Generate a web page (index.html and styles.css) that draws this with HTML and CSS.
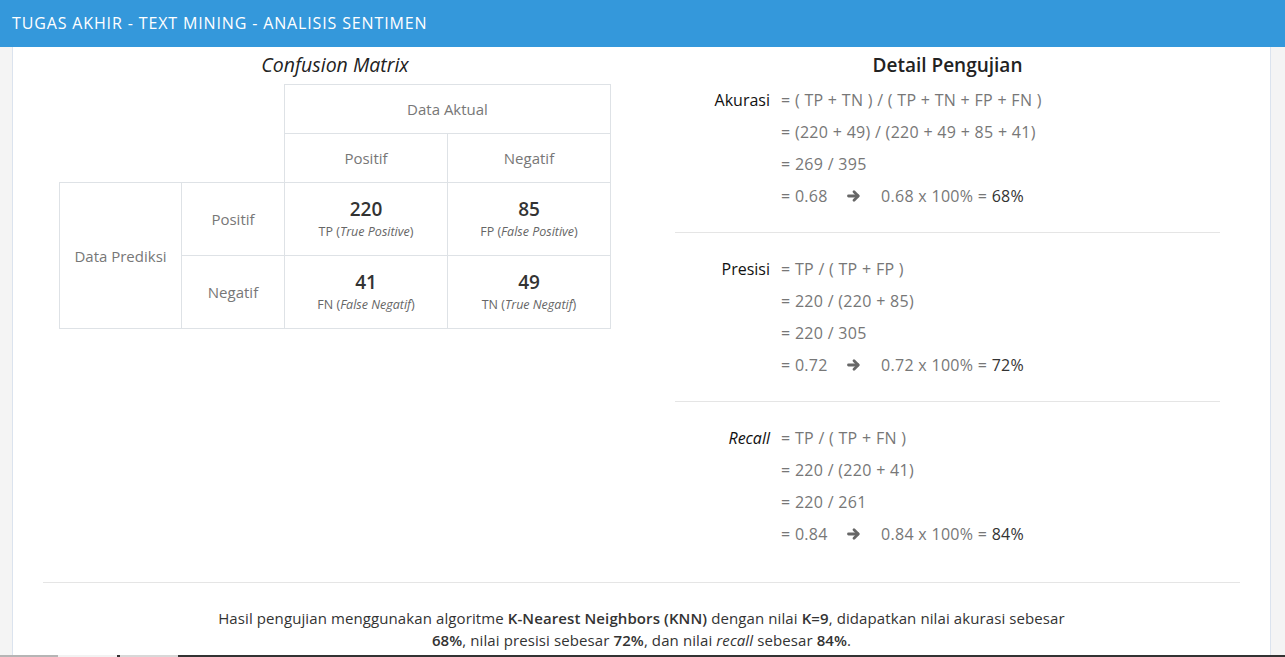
FILE: index.html
```html
<!DOCTYPE html>
<html lang="id">
<head>
<meta charset="utf-8">
<title>Tugas Akhir - Text Mining - Analisis Sentimen</title>
<link rel="stylesheet" href="styles.css">
</head>
<body>
<header class="navbar">TUGAS AKHIR - TEXT MINING - ANALISIS SENTIMEN</header>
<main class="page">
  <div class="container">
    <div class="row">
      <section class="col-left">
        <h3 class="title-matrix">Confusion Matrix</h3>
        <table class="matrix">
          <colgroup>
            <col class="c1"><col class="c2"><col class="c3"><col class="c4">
          </colgroup>
          <tr class="r-head">
            <td class="blank" colspan="2" rowspan="2"></td>
            <td colspan="2">Data Aktual</td>
          </tr>
          <tr class="r-head">
            <td>Positif</td>
            <td>Negatif</td>
          </tr>
          <tr class="r-data">
            <td rowspan="2">Data Prediksi</td>
            <td>Positif</td>
            <td><div class="num">220</div><div class="sub">TP (<i>True Positive</i>)</div></td>
            <td><div class="num">85</div><div class="sub">FP (<i>False Positive</i>)</div></td>
          </tr>
          <tr class="r-data">
            <td>Negatif</td>
            <td><div class="num">41</div><div class="sub">FN (<i>False Negatif</i>)</div></td>
            <td><div class="num">49</div><div class="sub">TN (<i>True Negatif</i>)</div></td>
          </tr>
        </table>
      </section>
      <section class="col-right">
        <h3 class="title-detail">Detail Pengujian</h3>
        <div class="metric">
          <div class="line"><span class="label">Akurasi</span><span class="val">= ( TP + TN ) / ( TP + TN + FP + FN )</span></div>
          <div class="line"><span class="label"></span><span class="val">= (220 + 49) / (220 + 49 + 85 + 41)</span></div>
          <div class="line"><span class="label"></span><span class="val">= 269 / 395</span></div>
          <div class="line"><span class="label"></span><span class="val"><span class="res">= 0.68</span><span class="arrow"><svg viewBox="0 0 14 14" width="14" height="14"><path d="M1.5 7H11" /><path d="M7 2.8L11.2 7L7 11.2" /></svg></span>0.68 x 100% = <span class="final">68%</span></span></div>
        </div>
        <hr class="sep">
        <div class="metric">
          <div class="line"><span class="label">Presisi</span><span class="val">= TP / ( TP + FP )</span></div>
          <div class="line"><span class="label"></span><span class="val">= 220 / (220 + 85)</span></div>
          <div class="line"><span class="label"></span><span class="val">= 220 / 305</span></div>
          <div class="line"><span class="label"></span><span class="val"><span class="res">= 0.72</span><span class="arrow"><svg viewBox="0 0 14 14" width="14" height="14"><path d="M1.5 7H11" /><path d="M7 2.8L11.2 7L7 11.2" /></svg></span>0.72 x 100% = <span class="final">72%</span></span></div>
        </div>
        <hr class="sep">
        <div class="metric">
          <div class="line"><span class="label"><i>Recall</i></span><span class="val">= TP / ( TP + FN )</span></div>
          <div class="line"><span class="label"></span><span class="val">= 220 / (220 + 41)</span></div>
          <div class="line"><span class="label"></span><span class="val">= 220 / 261</span></div>
          <div class="line"><span class="label"></span><span class="val"><span class="res">= 0.84</span><span class="arrow"><svg viewBox="0 0 14 14" width="14" height="14"><path d="M1.5 7H11" /><path d="M7 2.8L11.2 7L7 11.2" /></svg></span>0.84 x 100% = <span class="final">84%</span></span></div>
        </div>
      </section>
    </div>
    <hr class="full">
    <p class="summary">Hasil pengujian menggunakan algoritme <b>K-Nearest Neighbors (KNN)</b> dengan nilai <b>K=9</b>, didapatkan nilai akurasi sebesar <b>68%</b>, nilai presisi sebesar <b>72%</b>, dan nilai <i>recall</i> sebesar <b>84%</b>.</p>
  </div>
</main>
<div class="taskbar"><span class="tb1"></span><span class="tb2"></span><span class="tb3"></span></div>
</body>
</html>
```

FILE: styles.css
```css
html, body {
  margin: 0;
  padding: 0;
}
body {
  background: #f4f4f4;
  font-family: "Open Sans", "Noto Sans", sans-serif;
  color: #333;
  overflow: hidden;
  height: 657px;
}
.navbar {
  height: 47px;
  line-height: 46px;
  background: #3498db;
  color: #fff;
  font-size: 16px;
  padding-left: 12px;
  letter-spacing: 0.86px;
}
.page {
  margin: 0 14px 0 12px;
  background: #fff;
  border-left: 1px solid #dbe3ee;
  border-right: 1px solid #dbe3ee;
  height: 610px;
}
.container {
  padding: 0 30px;
}
.row {
  display: flex;
}
.col-left {
  width: 552px;
  padding-left: 16px;
  padding-top: 5px;
}
.title-matrix {
  margin: 0 0 6px;
  font-size: 19.5px;
  line-height: 26px;
  font-weight: normal;
  font-style: italic;
  text-align: center;
  color: #222;
}
.matrix {
  border-collapse: collapse;
  table-layout: fixed;
  width: 551px;
  font-size: 15px;
  color: #777;
}
.c1 { width: 122px; }
.c2 { width: 103px; }
.c3 { width: 163px; }
.c4 { width: 163px; }
.matrix td {
  border: 1px solid #dee2e6;
  text-align: center;
  vertical-align: middle;
  padding: 0;
}
.matrix td.blank {
  border: none;
}
.r-head td { height: 48px; }
.r-data td { height: 72px; }
.num {
  font-size: 19px;
  font-weight: 600;
  color: #333;
  line-height: 25px;
}
.sub {
  font-size: 12.5px;
  color: #666;
  line-height: 20px;
}
.col-right {
  margin-left: 64px;
  width: 545px;
  padding-top: 5px;
}
.title-detail {
  margin: 0 0 6px;
  font-size: 19px;
  line-height: 26px;
  font-weight: 600;
  text-align: center;
  color: #222;
}
.line {
  display: flex;
  line-height: 32px;
  height: 32px;
  font-size: 16px;
}
.label {
  width: 95px;
  text-align: right;
  color: #111;
  flex: none;
}
.val {
  margin-left: 11px;
  color: #777;
  white-space: nowrap;
  letter-spacing: 0.3px;
}
.res {
  display: inline-block;
  width: 66px;
}
.arrow {
  display: inline-block;
  width: 34px;
  vertical-align: top;
  height: 32px;
}
.arrow svg {
  margin-top: 9px;
  fill: none;
  stroke: #666;
  stroke-width: 2.8;
  stroke-linecap: round;
  stroke-linejoin: round;
}
.final {
  color: #333;
}
.sep {
  border: 0;
  border-top: 1px solid #e5e5e5;
  margin: 20px 0;
}
.full {
  border: 0;
  border-top: 1px solid #e5e5e5;
  margin: 32px 0 24px;
}
.summary {
  margin: 0 auto;
  width: 862px;
  text-align: center;
  font-size: 15px;
  letter-spacing: 0.1px;
  line-height: 22px;
  color: #333;
}
.summary b {
  font-weight: 600;
}
.taskbar {
  position: fixed;
  left: 0;
  right: 0;
  bottom: 0;
  height: 2px;
  background: #333;
  display: flex;
}
.tb1 { width: 58px; background: #b5b5b5; }
.tb2 { width: 59px; background: #f2f2f2; }
.tb3 { width: 58px; margin-left: 3px; background: #d8d8d8; }
```
